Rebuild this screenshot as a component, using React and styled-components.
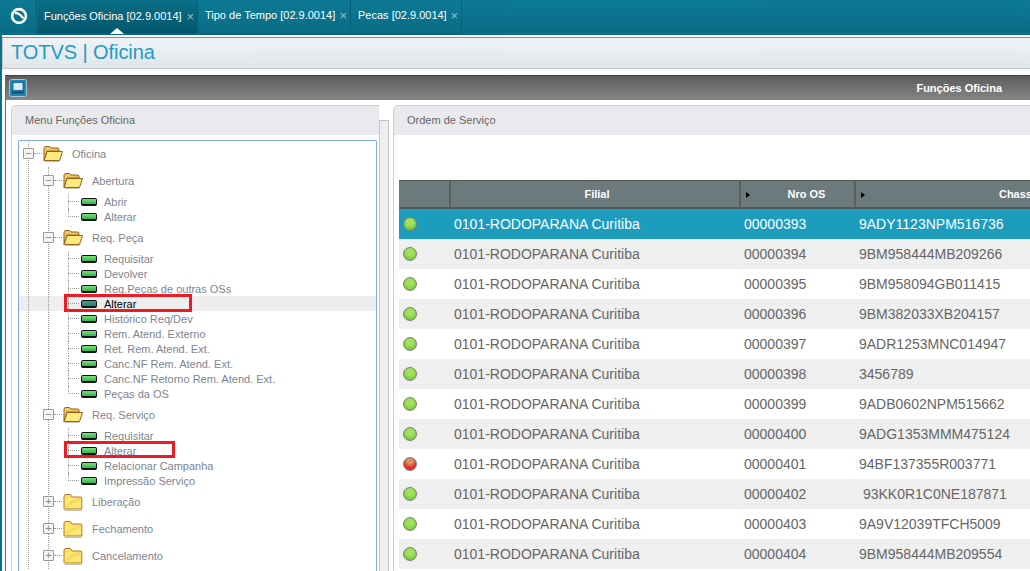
import styled, { createGlobalStyle } from "styled-components";

const GlobalStyle = createGlobalStyle`
  html, body { margin: 0; padding: 0; background: #fff; }
  body { font-family: "Liberation Sans", Arial, sans-serif; overflow: hidden; }
`

const tabs = [
  { label: "Funções Oficina [02.9.0014]", active: true, width: 160 },
  { label: "Tipo de Tempo [02.9.0014]", width: 152 },
  { label: "Pecas [02.9.0014]", width: 110 },
]

const orders = [
  ["00000393", "9ADY1123NPM516736"],
  ["00000394", "9BM958444MB209266"],
  ["00000395", "9BM958094GB011415"],
  ["00000396", "9BM382033XB204157"],
  ["00000397", "9ADR1253MNC014947"],
  ["00000398", "3456789"],
  ["00000399", "9ADB0602NPM515662"],
  ["00000400", "9ADG1353MMM475124"],
  ["00000401", "94BF137355R003771", true],
  ["00000402", " 93KK0R1C0NE187871"],
  ["00000403", "9A9V12039TFCH5009"],
  ["00000404", "9BM958444MB209554"],
]

function Logo() {
  return (
    <svg width="18" height="18" viewBox="0 0 18 18">
      <circle cx="9" cy="9" r="6.9" fill="none" stroke="#fff" strokeWidth="2.6" />
      <path d="M5 6.4 C8 5.4 11 8.4 13.4 11.4" fill="none" stroke="#fff" strokeWidth="2.2" />
    </svg>
  )
}

function WindowIcon() {
  return (
    <svg width="18" height="18" viewBox="0 0 18 18">
      <rect x="0.5" y="0.5" width="17" height="17" rx="2" fill="#1f84b4" stroke="#a9c4d2" />
      <rect x="4" y="3.5" width="10" height="8" fill="#d9e8f2" stroke="#0d5f8a" strokeWidth="0.8" />
      <rect x="3" y="12.5" width="12" height="2" fill="#0d4f78" />
    </svg>
  )
}

function OpenFolder() {
  return (
    <svg width="20" height="18" viewBox="0 0 20 18">
      <path d="M1 15.5 V3 L2 1.5 H6.5 L8 3 H15 L16 4 V6 H4 L1 15.5 Z" fill="#eccb5e" stroke="#96611f" />
      <path d="M4 6.5 H19.5 L16.5 15.5 H1.2 Z" fill="#ffe97f" stroke="#96611f" />
      <path d="M2 16.5 H16.5" stroke="#c9c2b0" />
    </svg>
  )
}

function ClosedFolder() {
  return (
    <svg width="20" height="18" viewBox="0 0 20 18">
      <path d="M1 16 V3 L2 1.5 H7.5 L9 4 H18 L18.8 5 V16 Z" fill="#f9e068" stroke="#ad7c2e" />
      <path d="M2 5.5 H18 V15 H2 Z" fill="#fce772" />
      <path d="M2 15.5 L9 9 L18 6" fill="none" stroke="#f2d24f" strokeWidth="3" opacity="0.6" />
      <path d="M2 17.5 H19" stroke="#c9c2b0" />
    </svg>
  )
}

function Folder({ label, open, children }) {
  return (
    <>
      <FolderRow>
        <Expander>{open ? "−" : "+"}</Expander>
        <HDots />
        {open ? <OpenFolder /> : <ClosedFolder />}
        <FolderLabel>{label}</FolderLabel>
      </FolderRow>
      {children}
    </>
  )
}

function Leaves({ items }) {
  return (
    <LeafGroup>
      {items.map((item, i) => (
        <LeafRow key={i} selected={item.selected} last={i === items.length - 1}>
          <LeafDots />
          <Pill selected={item.selected} />
          <LeafLabel selected={item.selected}>{item.label}</LeafLabel>
          {item.mark && <RedMark $w={item.mark[0]} $h={item.mark[1]} />}
        </LeafRow>
      ))}
    </LeafGroup>
  )
}

export default function App() {
  return (
    <>
      <GlobalStyle />
      <Page>
        <TopBar>
          <LogoCell><Logo /></LogoCell>
          {tabs.map((t) => (
            <Tab key={t.label} active={t.active} $w={t.width}>
              {t.label}
              <TabClose>×</TabClose>
              {t.active && <TabCaret />}
            </Tab>
          ))}
        </TopBar>
        <Content>
          <AppHeader>TOTVS | Oficina</AppHeader>
          <Window>
            <WindowBar>
              <WindowIcon />
              <WindowTitle>Funções Oficina</WindowTitle>
            </WindowBar>
            <WindowBody>
              <LeftPanel>
                <PanelHeader>Menu Funções Oficina</PanelHeader>
                <TreeBox>
                  <Group>
                    <Folder label="Oficina" open>
                      <Group $nested>
                        <Folder label="Abertura" open>
                          <Leaves items={[{ label: "Abrir" }, { label: "Alterar" }]} />
                        </Folder>
                        <Folder label="Req. Peça" open>
                          <Leaves items={[
                            { label: "Requisitar" },
                            { label: "Devolver" },
                            { label: "Req.Peças de outras OSs" },
                            { label: "Alterar", selected: true, mark: [128, 18] },
                            { label: "Histórico Req/Dev" },
                            { label: "Rem. Atend. Externo" },
                            { label: "Ret. Rem. Atend. Ext." },
                            { label: "Canc.NF Rem. Atend. Ext." },
                            { label: "Canc.NF Retorno Rem. Atend. Ext." },
                            { label: "Peças da OS" },
                          ]} />
                        </Folder>
                        <Folder label="Req. Serviço" open>
                          <Leaves items={[
                            { label: "Requisitar" },
                            { label: "Alterar", mark: [111, 17] },
                            { label: "Relacionar Campanha" },
                            { label: "Impressão Serviço" },
                          ]} />
                        </Folder>
                        <Folder label="Liberação" />
                        <Folder label="Fechamento" />
                        <Folder label="Cancelamento" />
                      </Group>
                    </Folder>
                  </Group>
                </TreeBox>
              </LeftPanel>
              <Splitter />
              <RightPanel>
                <PanelHeader>Ordem de Serviço</PanelHeader>
                <Grid>
                  <GridHead>
                    <HeadCell />
                    <HeadCell $pad={4}>Filial</HeadCell>
                    <HeadCell sortable $pad={18}>Nro OS</HeadCell>
                    <HeadCell sortable $pad={20}>Chassi</HeadCell>
                  </GridHead>
                  {orders.map(([os, chassi, late], i) => (
                    <GridRow key={os} selected={i === 0} odd={i % 2 === 1}>
                      <BallCell><Ball late={late} /></BallCell>
                      <Cell>0101-RODOPARANA Curitiba</Cell>
                      <Cell>{os}</Cell>
                      <Cell>{chassi}</Cell>
                    </GridRow>
                  ))}
                </Grid>
              </RightPanel>
            </WindowBody>
          </Window>
        </Content>
      </Page>
    </>
  )
}

const Page = styled.div`
  width: 1030px;
  height: 571px;
  overflow: hidden;
  display: flex;
  flex-direction: column;
  background: #fff;
`
const TopBar = styled.div`
  height: 35px;
  flex-shrink: 0;
  display: flex;
  gap: 1px;
  background: linear-gradient(#0d7a94, #0a6c86);
  box-sizing: border-box;
  padding-bottom: 1px;
`
const LogoCell = styled.div`
  width: 37px;
  display: flex;
  align-items: center;
  justify-content: center;
  border-right: 1px solid #0a5f76;
  box-sizing: border-box;
  padding: 0 0 2px 2px;
`
const Tab = styled.div`
  position: relative;
  width: ${(props) => props.$w}px;
  box-sizing: border-box;
  display: flex;
  align-items: center;
  justify-content: space-between;
  padding: ${(props) => (props.active ? "0 3px 1px 6px" : "0 3px 3px 6px")};
  color: #fff;
  font-size: 11px;
  white-space: nowrap;
  border-right: 1px solid #0a5f76;
  border-bottom: 1px solid #0a5f76;
  background: ${(props) => (props.active ? "linear-gradient(#0a6f88, #05566c)" : "linear-gradient(#0d7a94, #0a6c86)")};
`
const TabClose = styled.span`
  color: #9cc0cc;
  font-size: 13px;
`
const TabCaret = styled.span`
  position: absolute;
  left: 72px;
  bottom: -1px;
  width: 0;
  height: 0;
  border-left: 7px solid transparent;
  border-right: 7px solid transparent;
  border-bottom: 6px solid #fff;
`
const Content = styled.div`
  flex: 1;
  min-height: 0;
  display: flex;
  flex-direction: column;
  border-left: 2px solid #0d7089;
  padding-top: 2px;
  background: #fff;
`
const AppHeader = styled.div`
  height: 32px;
  flex-shrink: 0;
  box-sizing: border-box;
  padding-left: 8px;
  line-height: 28px;
  font-size: 20px;
  letter-spacing: -0.07px;
  color: #1f9bc9;
  border-top: 1px solid #8a8a8a;
  border-left: 1px solid #c4c4c4;
  border-bottom: 1px solid #c8c8c8;
  background: linear-gradient(#f0f3f5, #e0e6ea);
`
const Window = styled.div`
  flex: 1;
  min-height: 0;
  margin: 6px 0 0 3px;
  display: flex;
  flex-direction: column;
  border-left: 1px solid #666;
`
const WindowBar = styled.div`
  height: 25px;
  flex-shrink: 0;
  box-sizing: border-box;
  display: flex;
  align-items: center;
  justify-content: space-between;
  padding: 0 28px 0 3px;
  border-top: 1px solid #444;
  background: linear-gradient(#5c5c5c, #868686);
`
const WindowTitle = styled.span`
  color: #fff;
  font-size: 11px;
  font-weight: bold;
`
const WindowBody = styled.div`
  flex: 1;
  min-height: 0;
  display: flex;
  padding: 5px 0 0 5px;
  background: #fff;
`
const LeftPanel = styled.div`
  width: 368px;
  flex-shrink: 0;
  display: flex;
  flex-direction: column;
  box-sizing: border-box;
  border-left: 1px solid #cfcfcf;
  border-top-left-radius: 5px;
`
const PanelHeader = styled.div`
  height: 30px;
  flex-shrink: 0;
  box-sizing: border-box;
  padding-left: 13px;
  line-height: 28px;
  font-size: 11px;
  color: #666;
  background: #eaeaee;
  border-top: 1px solid #cfcfcf;
  border-top-left-radius: 5px;
`
const TreeBox = styled.div`
  flex: 1;
  min-height: 0;
  margin: 5px 2px 0 6px;
  overflow: hidden;
  isolation: isolate;
  background: #fff;
  border: 1px solid #7fa8e8;
  border-bottom: none;
  border-radius: 2px 2px 0 0;
`
const Group = styled.div`
  margin-left: ${(props) => (props.$nested ? "19px" : "9px")};
  margin-top: ${(props) => (props.$nested ? "0" : "-1px")};
  border-left: 1px dotted #999;
`
const FolderRow = styled.div`
  height: 27px;
  margin-left: -6px;
  display: flex;
  align-items: center;
`
const Expander = styled.span`
  width: 11px;
  height: 11px;
  box-sizing: border-box;
  flex-shrink: 0;
  border: 1px solid #999;
  border-radius: 1px;
  background: #f4f4f4;
  color: #888;
  font-size: 11px;
  line-height: 8px;
  text-align: center;
`
const HDots = styled.span`
  width: 8px;
  margin: 0 1px 0 0;
  border-top: 1px dotted #999;
`
const FolderLabel = styled.span`
  margin-left: 9px;
  font-size: 11px;
  color: #7d8590;
`
const LeafGroup = styled.div`
  margin-left: 19px;
`
const LeafRow = styled.div`
  position: relative;
  height: 15px;
  display: flex;
  align-items: center;
  &::before {
    content: "";
    position: absolute;
    left: 0;
    top: 0;
    bottom: ${(props) => (props.last ? "7px" : "0")};
    border-left: 1px dotted #999;
  }
  &::after {
    content: "";
    display: ${(props) => (props.selected ? "block" : "none")};
    position: absolute;
    left: -49px;
    width: 600px;
    top: 0;
    bottom: 0;
    background: #eee;
    z-index: -1;
  }
`
const LeafDots = styled.span`
  width: 11px;
  margin: 0 2px 0 0;
  border-top: 1px dotted #999;
`
const Pill = styled.span`
  width: 16px;
  height: 8px;
  box-sizing: border-box;
  flex-shrink: 0;
  border: 1px solid #111;
  border-bottom-width: 2px;
  border-radius: 2px;
  background: ${(props) => (props.selected ? "linear-gradient(#3f9f88, #2a7f73)" : "linear-gradient(#7fe07f, #2fb150)")};
`
const LeafLabel = styled.span`
  margin-left: 7px;
  font-size: 11px;
  white-space: nowrap;
  color: ${(props) => (props.selected ? "#000" : "#7d8590")};
`
const RedMark = styled.span`
  position: absolute;
  left: -4px;
  top: -2px;
  width: ${(props) => props.$w}px;
  height: ${(props) => props.$h}px;
  box-sizing: border-box;
  border: 3px solid #ed1c24;
`
const Splitter = styled.div`
  width: 10px;
  flex-shrink: 0;
  box-sizing: border-box;
  margin: 15px 4px 0 0;
  background: #eee;
  border: 1px solid #c4c4c4;
  border-bottom: none;
`
const RightPanel = styled.div`
  flex: 1;
  min-width: 0;
  display: flex;
  flex-direction: column;
  box-sizing: border-box;
  border-left: 1px solid #cfcfcf;
  border-top-left-radius: 5px;
  overflow: hidden;
`
const Grid = styled.div`
  margin: 45px 0 0 5px;
  width: 761px;
  display: flex;
  flex-direction: column;
`
const GridHead = styled.div`
  height: 29px;
  flex-shrink: 0;
  box-sizing: border-box;
  display: grid;
  grid-template-columns: 52px 290px 115px 304px;
  background: #6c7a7e;
  border-top: 1px solid #555;
  border-bottom: 2px solid #555;
`
const HeadCell = styled.div`
  position: relative;
  box-sizing: border-box;
  display: flex;
  align-items: center;
  justify-content: center;
  padding-left: ${(props) => props.$pad || 0}px;
  font-size: 11px;
  font-weight: bold;
  color: #fff;
  border-right: 2px solid #55605f;
  &::before {
    content: "";
    display: ${(props) => (props.sortable ? "block" : "none")};
    position: absolute;
    left: 5px;
    top: 11px;
    border-left: 4px solid #000;
    border-top: 3.5px solid transparent;
    border-bottom: 3.5px solid transparent;
  }
`
const GridRow = styled.div`
  height: 30px;
  flex-shrink: 0;
  display: grid;
  grid-template-columns: 52px 290px 115px 304px;
  align-items: center;
  font-size: 14px;
  color: ${(props) => (props.selected ? "#fff" : "#666")};
  background: ${(props) => (props.selected ? "#1c9dbe" : props.odd ? "#efefef" : "#fff")};
`
const BallCell = styled.div`
  padding-left: 4px;
  display: flex;
  align-items: center;
`
const Ball = styled.span`
  width: 14px;
  height: 14px;
  box-sizing: border-box;
  border-radius: 50%;
  border: 1px solid #7d7d7d;
  background: ${(props) => (props.late ? "radial-gradient(circle at 50% 25%, #d9945f 0 25%, #ea2a28 60%)" : "radial-gradient(circle at 50% 35%, #a4e060 0 30%, #70c830 80%)")};
`
const Cell = styled.div`
  padding-left: 3px;
  white-space: pre;
`
